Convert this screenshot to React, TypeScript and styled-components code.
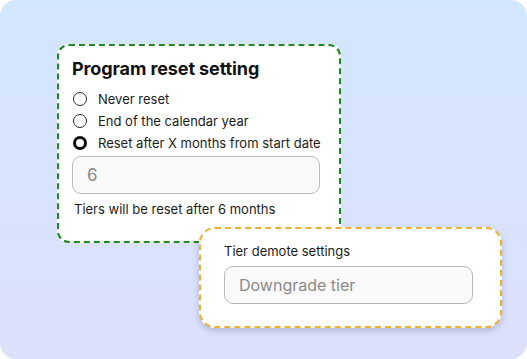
import React from 'react';
import styled, {createGlobalStyle} from "styled-components";

const Global = createGlobalStyle`
  html, body {
    margin: 0;
    padding: 0;
    background: #ffffff;
  }
  body {
    font-family: Inter, "Noto Sans", sans-serif;
  }
`

const Frame = styled.div`
  width: 527px;
  height: 359px;
  box-sizing: border-box;
  border-radius: 16px;
  background: linear-gradient(180deg, #d3e7fd 0%, #d8e3fc 55%, #dde0fb 100%);
  padding: 44px 0 0 57px;
  overflow: hidden;
`

const ResetCard = styled.div`
  width: 284px;
  height: 199px;
  box-sizing: border-box;
  background: #ffffff;
  border: 2px dashed #1f8a1f;
  border-radius: 12px;
  padding: 12px 10px 0 13px;
  display: flex;
  flex-direction: column;
`

const Title = styled.h2`
  margin: 0 0 8px 0;
  font-size: 18px;
  font-weight: 700;
  color: #111111;
  line-height: 22px;
  letter-spacing: -0.1px;
`

const Options = styled.div`
  display: flex;
  flex-direction: column;
`

const Option = styled.label`
  display: flex;
  align-items: center;
  height: 22px;
  gap: 11px;
  font-size: 13px;
  color: #1c1c1c;
  white-space: nowrap;
`

const Radio = styled.span<{ checked?: boolean }>`
  flex: none;
  width: 14px;
  height: 14px;
  box-sizing: border-box;
  border-radius: 50%;
  border: ${props => props.checked ? '3.5px solid #0d0d0d' : '1.2px solid #2a2a2a'};
  margin-left: 1px;
  background: #fff;
`

const Field = styled.div<{ size?: number }>`
  height: 38px;
  box-sizing: border-box;
  border: 1px solid #b9b9b9;
  border-radius: 9px;
  background: #fafafa;
  display: flex;
  align-items: center;
  padding-left: 14px;
  color: #8a8a8a;
  font-size: ${props => props.size || 16}px;
`

const ValueField = styled(Field)`
  width: 248px;
  margin-top: 2px;
`

const Hint = styled.div`
  margin: 7px 0 0 2px;
  font-size: 13px;
  color: #1c1c1c;
`

const DemoteCard = styled.div`
  width: 303px;
  height: 101px;
  box-sizing: border-box;
  margin: -16px 0 0 142px;
  position: relative;
  background: #ffffff;
  border: 2px dashed #efb22e;
  border-radius: 16px;
  padding: 14px 28px 0 23px;
  box-shadow: 0 3px 6px rgba(60, 60, 90, 0.25);
`

const Label = styled.div`
  font-size: 13px;
  color: #1c1c1c;
  margin-bottom: 7px;
`

const TierField = styled(Field)`
  width: 249px;
`

const options = [
    {label: 'Never reset', checked: false},
    {label: 'End of the calendar year', checked: false},
    {label: 'Reset after X months from start date', checked: true},
];

const App: React.FC = () => {
    return (
        <>
            <Global/>
            <Frame>
                <ResetCard>
                    <Title>Program reset setting</Title>
                    <Options>
                        {options.map(o => (
                            <Option key={o.label}>
                                <Radio checked={o.checked}/>
                                {o.label}
                            </Option>
                        ))}
                    </Options>
                    <ValueField size={17}>6</ValueField>
                    <Hint>Tiers will be reset after 6 months</Hint>
                </ResetCard>
                <DemoteCard>
                    <Label>Tier demote settings</Label>
                    <TierField>Downgrade tier</TierField>
                </DemoteCard>
            </Frame>
        </>
    );
}

export default App;
